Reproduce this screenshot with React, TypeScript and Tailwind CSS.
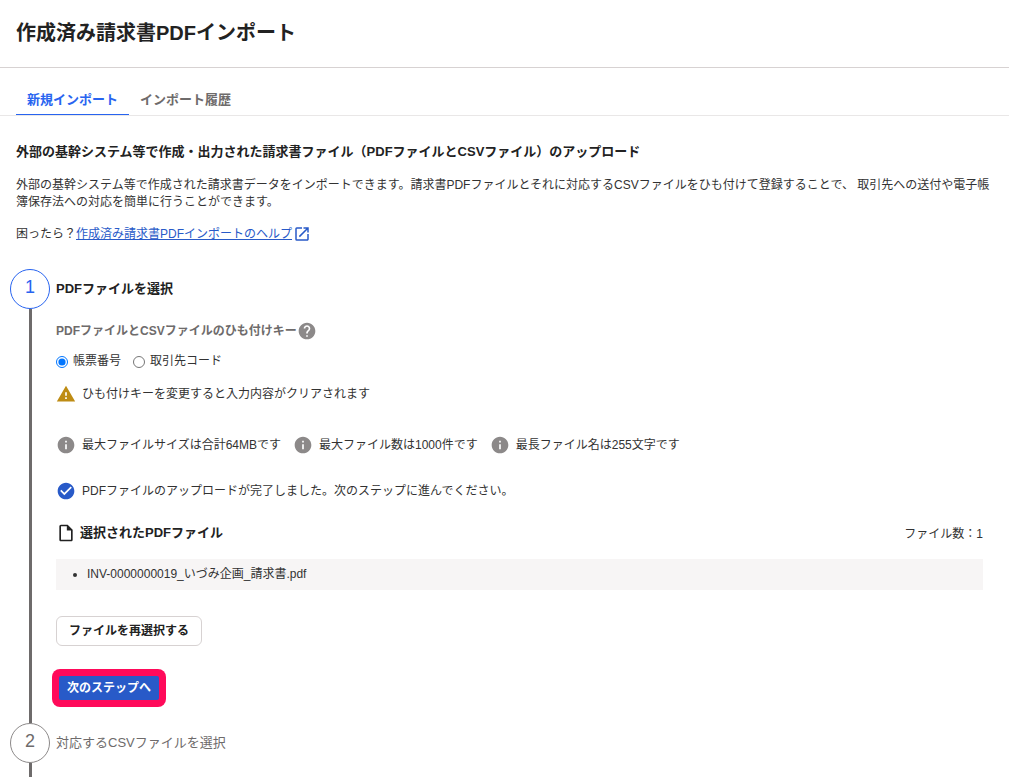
import type { ReactNode } from "react";
import {
  MdCheckCircle,
  MdHelp,
  MdInfo,
  MdOpenInNew,
  MdOutlineInsertDriveFile,
  MdWarning,
} from "react-icons/md";

const limits = [
  "最大ファイルサイズは合計64MBです",
  "最大ファイル数は1000件です",
  "最長ファイル名は255文字です",
];

const files = ["INV-0000000019_いづみ企画_請求書.pdf"];

type StepProps = {
  number: number;
  title: string;
  active?: boolean;
  last?: boolean;
  children?: ReactNode;
};

function Step({ number, title, active, last, children }: StepProps) {
  return (
    <li className={last ? "flex grow gap-[6px]" : "flex gap-[6px]"}>
      {/* Circle and the rail below it */}
      <div className="flex w-10 shrink-0 flex-col items-center">
        <span
          className={
            active
              ? "flex size-10 items-center justify-center rounded-full border border-[#2864f0] pb-1 text-[18px] leading-6 text-[#2864f0]"
              : "flex size-10 items-center justify-center rounded-full border border-[#8c8989] pb-1 text-[18px] leading-6 text-[#6e6b6b]"
          }
        >
          {number}
        </span>
        <span className="w-[3px] grow bg-[#6e6b6b]" />
      </div>

      <div className="min-w-0 grow">
        <h3
          className={
            active
              ? "flex h-10 items-center pb-[2px] text-[13px] font-bold text-[#222222]"
              : "flex h-10 items-center pb-[2px] text-[13px] text-[#6e6b6b]"
          }
        >
          {title}
        </h3>
        {children}
      </div>
    </li>
  );
}

export default function App() {
  return (
    <div className="flex min-h-screen flex-col bg-white font-['Liberation_Sans','Noto_Sans_CJK_JP',sans-serif] text-[12px] leading-[17px] text-[#323232]">
      <header className="border-b border-[#d7d2d2] px-4 py-4">
        <h1 className="text-[20px] leading-[35px] font-bold text-[#222222]">
          作成済み請求書PDFインポート
        </h1>
      </header>

      <nav className="flex border-b border-[#e9e7e7] px-4 pt-4 text-[13px] leading-[17px] font-bold">
        <a
          href="#new"
          className="border-b border-b-[#2864f0] px-[11px] pt-[7px] pb-[6px] text-[#2864f0]"
        >
          新規インポート
        </a>
        <a href="#history" className="px-[11px] pt-[7px] pb-[6px] text-[#6e6b6b]">
          インポート履歴
        </a>
      </nav>

      <main className="flex grow flex-col">
        <section className="px-4 pt-[26px]">
          <h2 className="text-[13px] leading-5 font-bold text-[#222222]">
            外部の基幹システム等で作成・出力された請求書ファイル（PDFファイルとCSVファイル）のアップロード
          </h2>
          <p className="mt-[15px]">
            外部の基幹システム等で作成された請求書データをインポートできます。請求書PDFファイルとそれに対応するCSVファイルをひも付けて登録することで、
            取引先への送付や電子帳簿保存法への対応を簡単に行うことができます。
          </p>
          <p className="mt-[14px] flex items-center">
            困ったら？
            <a href="#help" className="flex items-center gap-px text-[#285ac8]">
              <span className="underline">作成済み請求書PDFインポートのヘルプ</span>
              <MdOpenInNew className="size-[18px]" />
            </a>
          </p>
        </section>

        <ol className="mt-[26px] flex grow flex-col pr-[26px] pl-[10px]">
          <Step number={1} title="PDFファイルを選択" active>
            <fieldset className="mt-3">
              <legend className="flex items-center font-bold text-[#6e6b6b]">
                PDFファイルとCSVファイルのひも付けキー
                <button type="button" aria-label="ひも付けキーのヘルプ" className="text-[#8c8989]">
                  <MdHelp className="size-5" />
                </button>
              </legend>
              <div className="mt-3 flex gap-3">
                <label className="flex items-center gap-[5px]">
                  <input type="radio" name="linkKey" defaultChecked className="size-3" />
                  帳票番号
                </label>
                <label className="flex items-center gap-[5px]">
                  <input type="radio" name="linkKey" className="size-3" />
                  取引先コード
                </label>
              </div>
            </fieldset>

            <p className="mt-[14px] flex items-center gap-[6px]">
              <MdWarning className="size-5 text-[#be8c14]" />
              ひも付けキーを変更すると入力内容がクリアされます
            </p>

            <ul className="mt-[31px] flex flex-wrap gap-3">
              {limits.map((text) => (
                <li key={text} className="flex items-center gap-[6px]">
                  <MdInfo className="size-5 text-[#8c8989]" />
                  {text}
                </li>
              ))}
            </ul>

            <p className="mt-[26px] flex items-center gap-[6px]">
              <MdCheckCircle className="size-5 text-[#285ac8]" />
              PDFファイルのアップロードが完了しました。次のステップに進んでください。
            </p>

            <div className="mt-[22px] flex items-end justify-between">
              <h4 className="flex items-center gap-1 text-[13px] leading-5 font-bold text-[#222222]">
                <MdOutlineInsertDriveFile className="size-5" />
                選択されたPDFファイル
              </h4>
              <span>ファイル数：1</span>
            </div>

            <ul className="mt-4 list-disc bg-[#f7f5f5] py-[7px] pl-[31px]">
              {files.map((name) => (
                <li key={name}>{name}</li>
              ))}
            </ul>

            <button
              type="button"
              className="mt-[26px] block h-[30px] rounded-md border border-[#d7d2d2] px-3 font-bold text-[#222222]"
            >
              ファイルを再選択する
            </button>

            {/* Highlighted primary action */}
            <div className="mt-[23px] mb-4 -ml-1 w-fit rounded-lg bg-[#ff0a5a] p-[7px]">
              <button
                type="button"
                className="block h-6 rounded-xs bg-[#285ac8] px-2 font-bold text-white"
              >
                次のステップへ
              </button>
            </div>
          </Step>

          <Step number={2} title="対応するCSVファイルを選択" last />
        </ol>
      </main>
    </div>
  );
}
